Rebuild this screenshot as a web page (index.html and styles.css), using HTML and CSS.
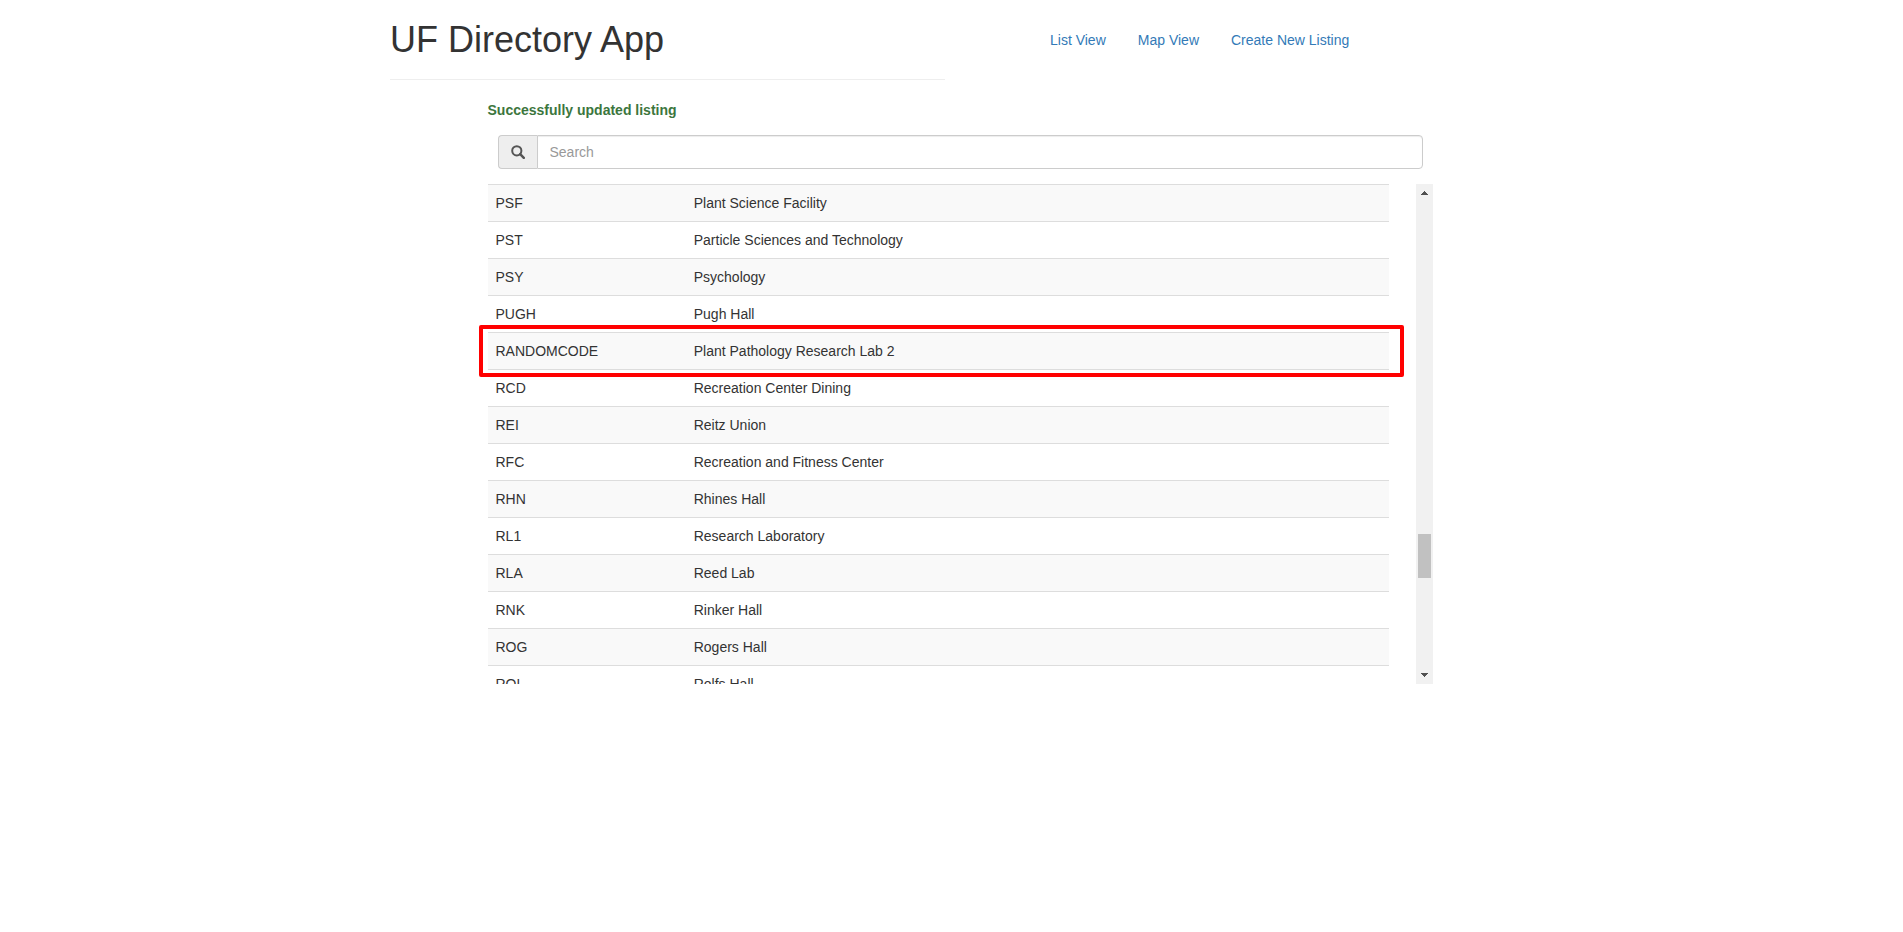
FILE: index.html
```html
<!DOCTYPE html>
<html lang="en">
<head>
<meta charset="utf-8">
<title>UF Directory App</title>
<link rel="stylesheet" href="styles.css">
</head>
<body>
<div class="container">
  <header class="header">
    <h1 class="title">UF Directory App</h1>
    <nav class="nav">
      <a class="nav-link" href="#list">List View</a>
      <a class="nav-link" href="#map">Map View</a>
      <a class="nav-link" href="#new">Create New Listing</a>
    </nav>
  </header>
  <main class="content">
    <p class="message" role="status">Successfully updated listing</p>
    <div class="search">
      <label class="search-addon" for="search" aria-label="Search">
        <svg class="search-icon" viewBox="0 0 14 14" aria-hidden="true">
          <circle cx="5.8" cy="5.8" r="4.6" fill="none" stroke="#555" stroke-width="2"/>
          <path d="M9.2 9.2L12.8 12.8" stroke="#555" stroke-width="2.5" stroke-linecap="round"/>
        </svg>
      </label>
      <input class="search-input" id="search" type="text" placeholder="Search">
    </div>
    <div class="listings">
      <table class="table">
        <tbody>
          <tr><td class="code">PSF</td><td>Plant Science Facility</td></tr>
          <tr><td class="code">PST</td><td>Particle Sciences and Technology</td></tr>
          <tr><td class="code">PSY</td><td>Psychology</td></tr>
          <tr><td class="code">PUGH</td><td>Pugh Hall</td></tr>
          <tr class="marked"><td class="code">RANDOMCODE<span class="marker"></span></td><td>Plant Pathology Research Lab 2</td></tr>
          <tr><td class="code">RCD</td><td>Recreation Center Dining</td></tr>
          <tr><td class="code">REI</td><td>Reitz Union</td></tr>
          <tr><td class="code">RFC</td><td>Recreation and Fitness Center</td></tr>
          <tr><td class="code">RHN</td><td>Rhines Hall</td></tr>
          <tr><td class="code">RL1</td><td>Research Laboratory</td></tr>
          <tr><td class="code">RLA</td><td>Reed Lab</td></tr>
          <tr><td class="code">RNK</td><td>Rinker Hall</td></tr>
          <tr><td class="code">ROG</td><td>Rogers Hall</td></tr>
          <tr><td class="code">ROL</td><td>Rolfs Hall</td></tr>
        </tbody>
      </table>
      <div class="scrollbar" aria-hidden="true">
        <svg class="arrow" viewBox="0 0 17 17" shape-rendering="crispEdges"><path d="M8 7h1v1h1v1h1v1h1v1H5v-1h1V9h1V8h1z" fill="#505050"/></svg>
        <div class="track"><div class="thumb"></div></div>
        <svg class="arrow" viewBox="0 0 17 17" shape-rendering="crispEdges"><path d="M5 6h7v1h-1v1h-1v1H9v1H8V9H7V8H6V7H5z" fill="#505050"/></svg>
      </div>
    </div>
  </main>
</div>
</body>
</html>
```
FILE: styles.css
```css
* {
  box-sizing: border-box;
}

body {
  margin: 0;
  padding-left: 17px;
  background: #fff;
  color: #333;
  font-family: "Helvetica Neue", Helvetica, Arial, "Liberation Sans", sans-serif;
  font-size: 14px;
  line-height: 20px;
}

.container {
  max-width: 1170px;
  margin: 0 auto;
  padding: 20px 15px;
}

.header {
  display: grid;
  grid-template-columns: 1fr 1fr;
  column-gap: 30px;
  align-items: start;
  margin-bottom: 20px;
}

.title {
  margin: 0;
  padding-bottom: 19px;
  border-bottom: 1px solid #eee;
  font-size: 36px;
  font-weight: 500;
  line-height: 40px;
}

.nav {
  display: flex;
  gap: 2px;
  padding-left: 60px;
}

.nav-link {
  padding: 10px 15px;
  color: #337ab7;
  text-decoration: none;
}

.content {
  width: 83%;
  max-width: 945px;
  margin: 0 auto;
}

.message {
  margin: 0 0 15px;
  color: #3c763d;
  font-weight: 700;
}

.search {
  display: flex;
  margin: 0 10px 15px;
}

.search-addon {
  display: flex;
  align-items: center;
  padding: 6px 12px;
  border: 1px solid #ccc;
  border-right: 0;
  border-radius: 4px 0 0 4px;
  background: #eee;
}

.search-icon {
  width: 14px;
  height: 14px;
}

.search-input {
  flex: 1;
  min-width: 0;
  height: 34px;
  padding: 6px 12px;
  border: 1px solid #ccc;
  border-radius: 0 4px 4px 0;
  box-shadow: inset 0 1px 1px rgba(0, 0, 0, 0.075);
  color: #555;
  font: inherit;
}

.search-input::placeholder {
  color: #999;
}

.listings {
  display: flex;
  align-items: flex-start;
  gap: 27px;
  height: 500px;
  overflow-y: clip;
}

.table {
  flex: 1;
  border-collapse: separate;
  border-spacing: 0;
}

.table td {
  padding: 8px;
  border-top: 1px solid #ddd;
}

.table .code {
  width: 22%;
}

.table tr:nth-child(odd) {
  background: #f9f9f9;
}

.marked {
  position: relative;
}

.marker {
  position: absolute;
  inset: -7px -15px -8px -9px;
  border: 4px solid #f00;
  border-radius: 2px;
  pointer-events: none;
}

.scrollbar {
  display: flex;
  flex-direction: column;
  align-self: stretch;
  width: 17px;
  background: #f1f1f1;
}

.arrow {
  width: 17px;
  height: 17px;
}

.track {
  flex: 1;
  padding: 333px 2px 0;
}

.thumb {
  height: 44px;
  background: #c1c1c1;
}
```
